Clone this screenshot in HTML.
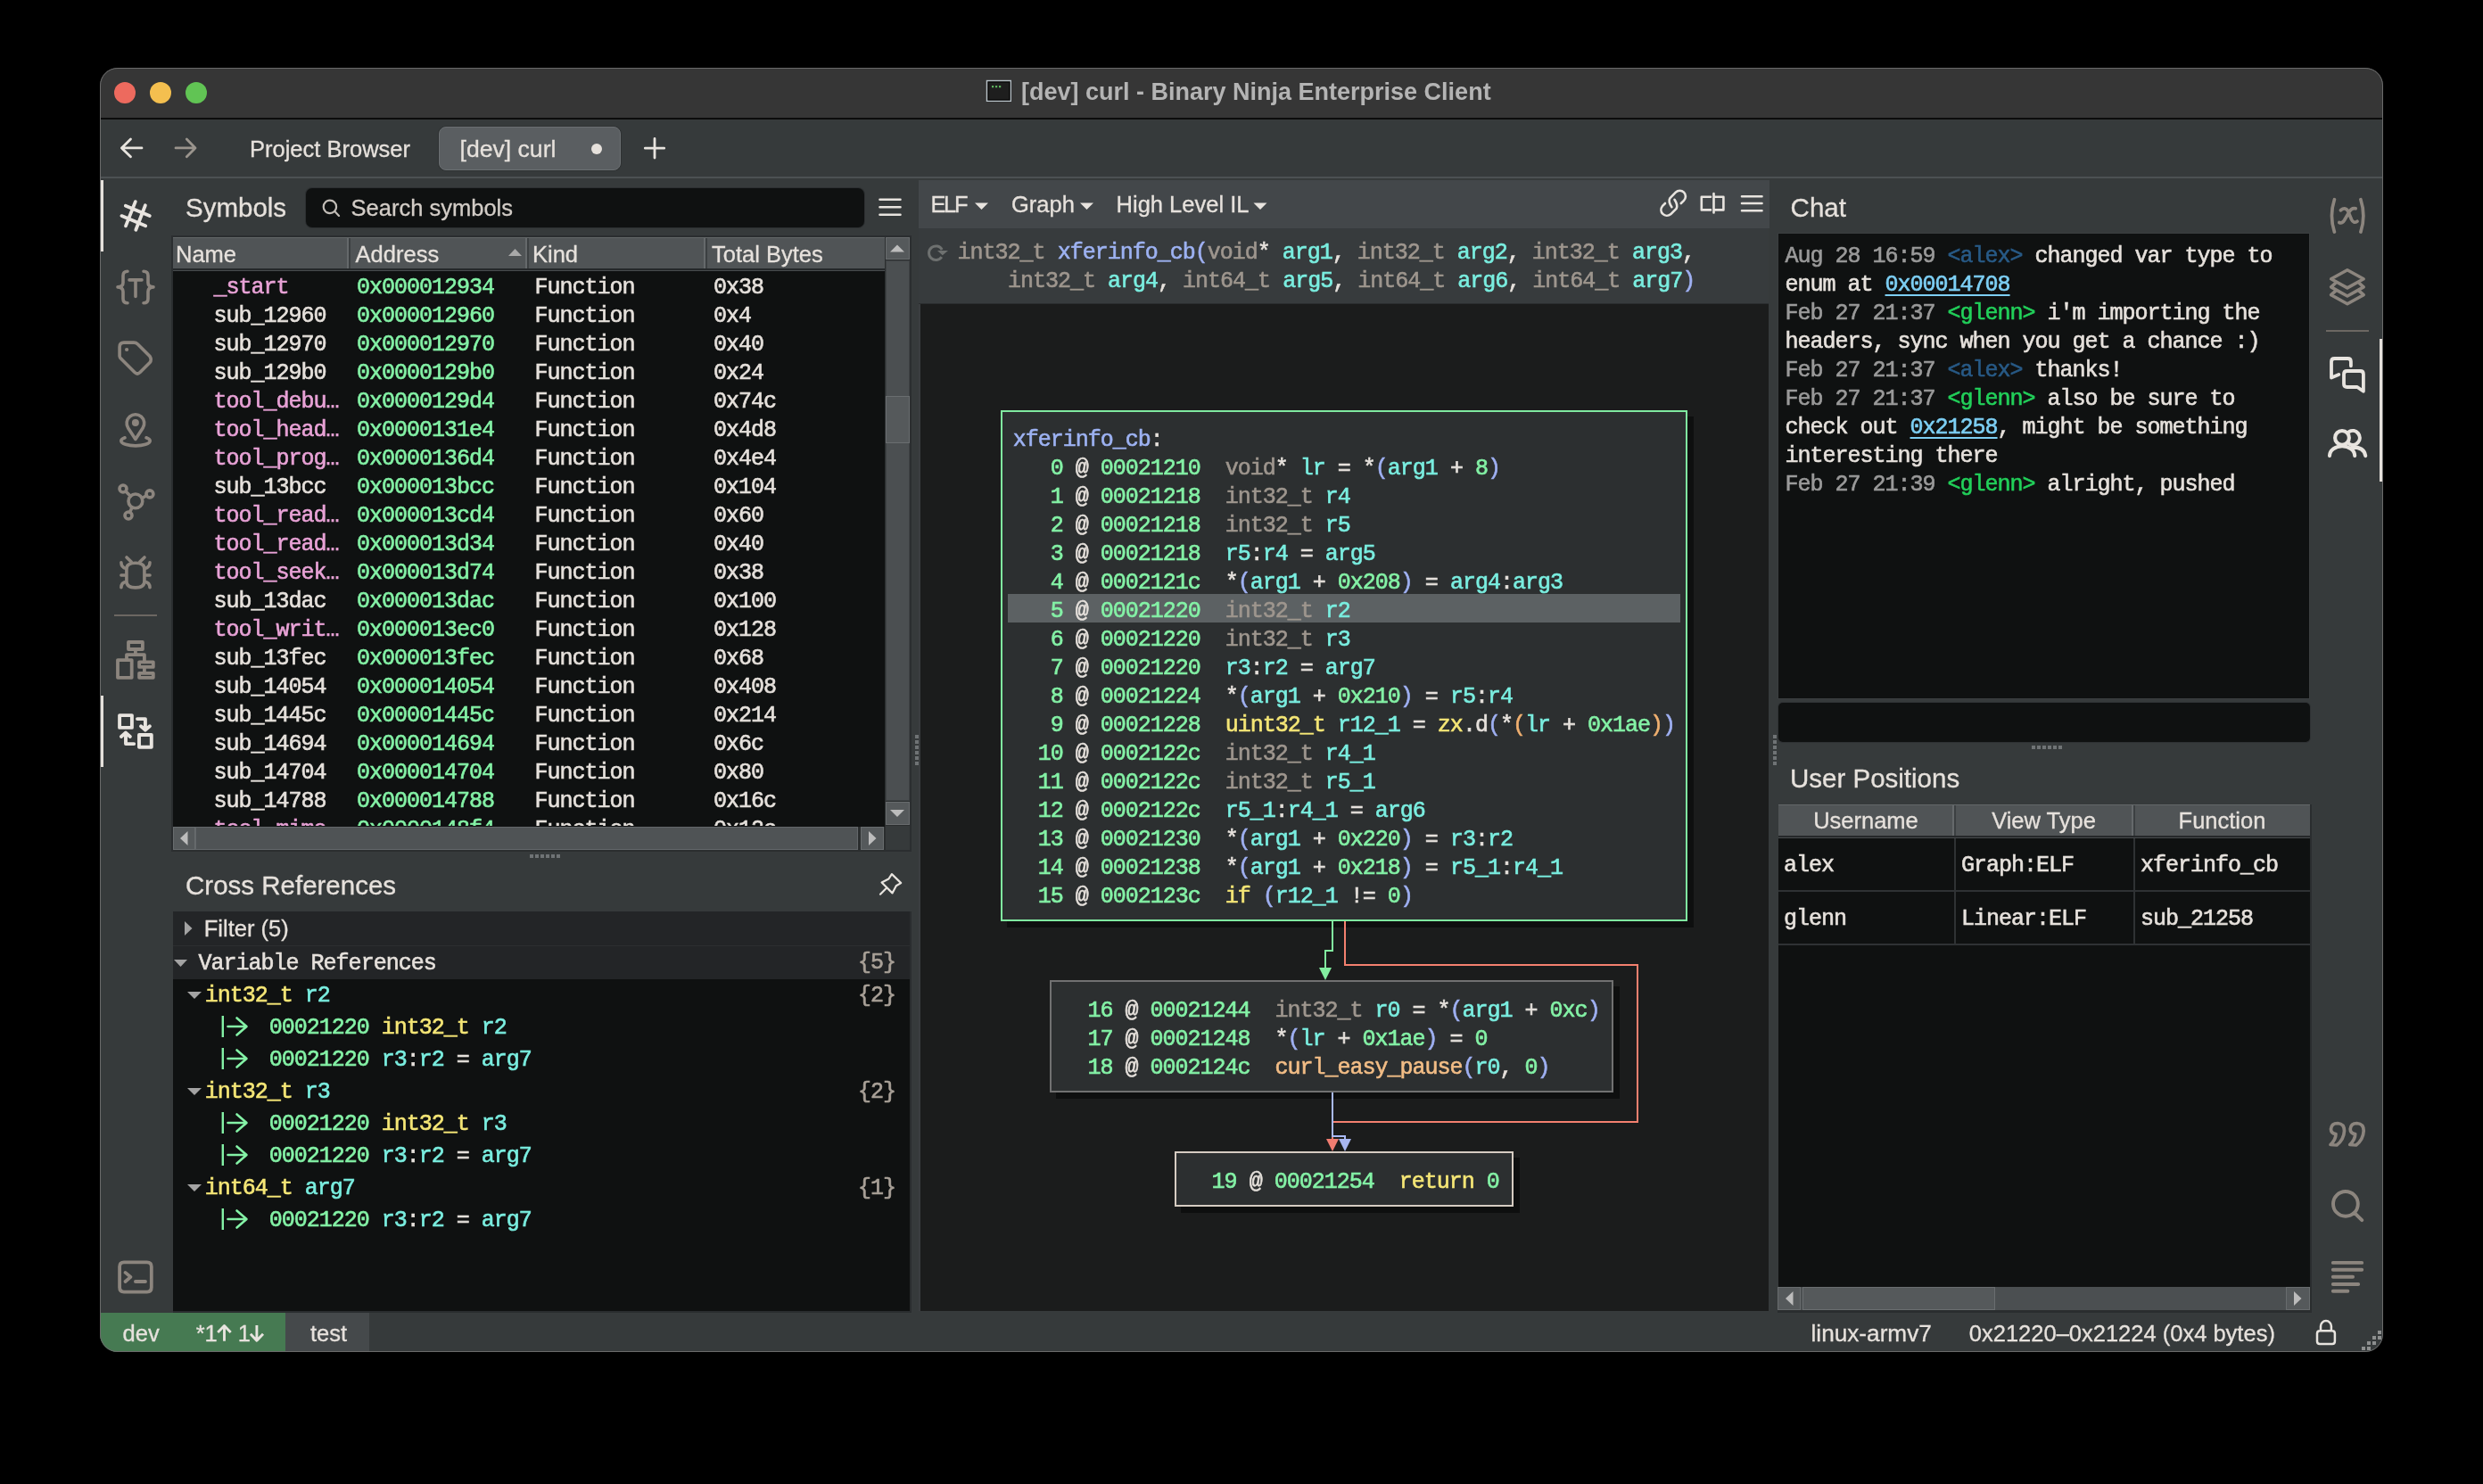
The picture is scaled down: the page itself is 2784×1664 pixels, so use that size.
<!DOCTYPE html>
<html><head><meta charset="utf-8">
<style>
*{margin:0;padding:0;box-sizing:border-box}
html,body{width:2784px;height:1664px;background:#000;overflow:hidden}
body{position:relative;font-family:"Liberation Sans",sans-serif;color:#e6e1dc}
.a{position:absolute}
.m{position:absolute;font-family:"Liberation Mono",monospace;font-size:25px;letter-spacing:-1px;line-height:32px;white-space:pre;-webkit-text-stroke-width:0.6px}
.s{position:absolute;font-family:"Liberation Sans",sans-serif;font-size:25.5px;line-height:40px;white-space:pre;-webkit-text-stroke-width:0.3px}
.t{position:absolute;font-family:"Liberation Sans",sans-serif;font-size:29.5px;line-height:40px;white-space:pre;-webkit-text-stroke-width:0.3px}
/* syntax colors */
.g{color:#84f2a6}  /* address / number green */
.c{color:#7aeee0}  /* variable cyan */
.ty{color:#9e968e} /* type gray */
.y{color:#f5e676}  /* keyword yellow */
.fn{color:#9db2f2} /* function name */
.pk{color:#e8a2d6} /* import pink */
.pp{color:#9fb0f2} /* paren purple */
.po{color:#f0b070} /* paren orange */
.or{color:#f2bd86} /* call orange */
.w{color:#e6e1dc}
#win{left:112px;top:76px;width:2560px;height:1440px;border-radius:20px;overflow:hidden;background:#363a3b}
</style></head>
<body>
<div id="win" class="a"><div id="pg" class="a" style="left:-112px;top:-76px;width:2784px;height:1664px">
  <!-- title bar -->
  <div class="a" style="left:112px;top:76px;width:2560px;height:56px;background:#363636"></div>
  <div class="a" style="left:112px;top:132px;width:2560px;height:2px;background:#0c0c0c"></div>
  <!-- toolbar -->
  <div class="a" style="left:112px;top:198px;width:2560px;height:2px;background:#4c5153"></div>
  <!-- status bar -->
  <div class="a" style="left:112px;top:1472px;width:208px;height:44px;background:#467a52"></div>
  <div class="a" style="left:320px;top:1472px;width:94px;height:44px;background:#45494b"></div>

  <!-- ===== STRUCTURE ===== -->
  <!-- left sidebar border -->
  <div class="a" style="left:192px;top:264px;width:830px;height:691px;background:#2b2e30"></div>
  <div class="a" style="left:112px;top:202px;width:4px;height:80px;background:#e6e1dc"></div>
  <div class="a" style="left:112px;top:780px;width:4px;height:80px;background:#e6e1dc"></div>
  <div class="a" style="left:128px;top:689px;width:48px;height:2px;background:#6c6762"></div>
  <!-- symbols search box -->
  <div class="a" style="left:343px;top:211px;width:626px;height:44px;background:#0f1111;border-radius:7px;box-shadow:0 0 0 1px #2d3032"></div>
  <!-- symbols table -->
  <div class="a" style="left:194px;top:266px;width:798px;height:661px;background:#0f1111"></div>
  <div class="a" style="left:194px;top:266px;width:798px;height:35px;background:#505456;border-top:1px solid #646869"></div>
  <div class="a" style="left:194px;top:301px;width:798px;height:2px;background:#25282a"></div>
  <div class="a" style="left:194px;top:303px;width:798px;height:1px;background:#474b4d"></div>
  <div class="a" style="left:389px;top:267px;width:2px;height:34px;background:#65696b"></div><div class="a" style="left:391px;top:267px;width:2px;height:34px;background:#3c4042"></div>
  <div class="a" style="left:589px;top:267px;width:2px;height:34px;background:#65696b"></div><div class="a" style="left:591px;top:267px;width:2px;height:34px;background:#3c4042"></div>
  <div class="a" style="left:789px;top:267px;width:2px;height:34px;background:#65696b"></div><div class="a" style="left:791px;top:267px;width:2px;height:34px;background:#3c4042"></div>
  <!-- vscroll -->
  <div class="a" style="left:992px;top:266px;width:28px;height:687px;background:#2b2e2f"></div>
  <div class="a" style="left:993px;top:266px;width:27px;height:25px;background:#55595b;border:1px solid #686c6e"></div>
  <div class="a" style="left:993px;top:292px;width:27px;height:606px;background:#4b4f51;border:1px solid #3e4244"></div>
  <div class="a" style="left:993px;top:444px;width:27px;height:53px;background:#55595b;border:1px solid #6a6e70"></div>
  <div class="a" style="left:993px;top:899px;width:27px;height:26px;background:#55595b;border:1px solid #686c6e"></div>
  <div class="a" style="left:993px;top:926px;width:27px;height:27px;background:#363a3b"></div>
  <!-- hscroll -->
  <div class="a" style="left:194px;top:927px;width:798px;height:28px;background:#2b2e2f"></div>
  <div class="a" style="left:194px;top:927px;width:25px;height:26px;background:#55595b;border:1px solid #686c6e"></div>
  <div class="a" style="left:219px;top:927px;width:743px;height:26px;background:#4f5355;border:1px solid #63676a"></div>
  <div class="a" style="left:965px;top:927px;width:26px;height:26px;background:#55595b;border:1px solid #686c6e"></div>
  <!-- xref panel -->
  <div class="a" style="left:194px;top:1022px;width:826px;height:38px;background:#232527"></div>
  <div class="a" style="left:194px;top:1060px;width:826px;height:1px;background:#2c2f31"></div>
  <div class="a" style="left:194px;top:1061px;width:826px;height:37px;background:#232527"></div>
  <div class="a" style="left:194px;top:1098px;width:826px;height:372px;background:#0f1111"></div>
  <div class="a" style="left:1020px;top:1022px;width:2px;height:450px;background:#2a2d2f"></div>
  <div class="a" style="left:194px;top:1470px;width:828px;height:2px;background:#2a2d2f"></div>
  <!-- center: graph header -->
  <div class="a" style="left:1030px;top:202px;width:954px;height:54px;background:#43474a"></div>
  <div class="a" style="left:1030px;top:256px;width:953px;height:85px;background:#373b3d"></div>
  <div class="a" style="left:1030px;top:340px;width:953px;height:1px;background:#2a2d2f"></div>
  <div class="a" style="left:1030px;top:341px;width:953px;height:1129px;background:#1b1c1c;border-left:2px solid #3b3e40"></div>
  <!-- right panel: chat -->
  <div class="a" style="left:1993px;top:261px;width:597px;height:523px;background:#0f1111;border:1px solid #3b3e40"></div>
  <div class="a" style="left:1994px;top:788px;width:596px;height:44px;background:#0f1111;border-radius:5px;box-shadow:0 0 0 1px #2f3234"></div>
  <!-- user positions table -->
  <div class="a" style="left:1994px;top:902px;width:596px;height:568px;background:#0f1111"></div>
  <div class="a" style="left:1994px;top:902px;width:596px;height:35px;background:#505456;border-top:1px solid #646869"></div>
  <div class="a" style="left:1994px;top:937px;width:596px;height:2px;background:#25282a"></div>
  <div class="a" style="left:1994px;top:939px;width:596px;height:1px;background:#474b4d"></div>
  <div class="a" style="left:2189px;top:903px;width:2px;height:34px;background:#65696b"></div><div class="a" style="left:2191px;top:903px;width:2px;height:34px;background:#3c4042"></div>
  <div class="a" style="left:2390px;top:903px;width:2px;height:34px;background:#65696b"></div><div class="a" style="left:2392px;top:903px;width:2px;height:34px;background:#3c4042"></div>
  <div class="a" style="left:1994px;top:998px;width:596px;height:2px;background:#2f3234"></div>
  <div class="a" style="left:1994px;top:1058px;width:596px;height:2px;background:#2f3234"></div>
  <div class="a" style="left:2191px;top:940px;width:2px;height:118px;background:#2f3234"></div>
  <div class="a" style="left:2392px;top:940px;width:2px;height:118px;background:#2f3234"></div>
  <div class="a" style="left:2590px;top:902px;width:2px;height:570px;background:#2a2d2f"></div>
  <!-- user pos hscroll -->
  <div class="a" style="left:1993px;top:1443px;width:598px;height:27px;background:#2b2e2f"></div>
  <div class="a" style="left:1993px;top:1443px;width:26px;height:26px;background:#55595b;border:1px solid #686c6e"></div>
  <div class="a" style="left:2019px;top:1443px;width:544px;height:26px;background:#4b4f51"></div>
  <div class="a" style="left:2021px;top:1443px;width:216px;height:26px;background:#55595b;border:1px solid #6a6e70"></div>
  <div class="a" style="left:2563px;top:1443px;width:27px;height:26px;background:#55595b;border:1px solid #686c6e"></div>
  <div class="a" style="left:1993px;top:1470px;width:599px;height:2px;background:#2a2d2f"></div>
  <!-- right sidebar -->
  <div class="a" style="left:2608px;top:370px;width:48px;height:2px;background:#6c6762"></div>
  <div class="a" style="left:2668px;top:380px;width:4px;height:160px;background:#e6e1dc"></div>
  <!-- tab -->
  <div class="a" style="left:491px;top:141px;width:206px;height:51px;border-radius:9px;background:#2f3233"></div>
  <div class="a" style="left:492px;top:142px;width:204px;height:49px;border-radius:8px;background:#5a5e61;border:1px solid #6b6f72"></div>
  <div class="a" style="left:663px;top:161px;width:12px;height:12px;border-radius:6px;background:#e6e1dc"></div>
  <!-- traffic lights -->
  <div class="a" style="left:128px;top:92px;width:24px;height:24px;border-radius:12px;background:#ed6a5e"></div>
  <div class="a" style="left:168px;top:92px;width:24px;height:24px;border-radius:12px;background:#f4bf4f"></div>
  <div class="a" style="left:208px;top:92px;width:24px;height:24px;border-radius:12px;background:#61c454"></div>
<!--NODES-->
  <div class="a" style="left:1122px;top:460px;width:770px;height:573px;background:#2c2f30;border:2px solid #80eaa0;box-shadow:7px 7px 0 #0e0f0f"></div>
  <div class="a" style="left:1177px;top:1099px;width:632px;height:126px;background:#2c2f30;border:2px solid #717171;box-shadow:7px 7px 0 #0e0f0f"></div>
  <div class="a" style="left:1317px;top:1291px;width:380px;height:62px;background:#2c2f30;border:2px solid #d6ccc2;box-shadow:7px 7px 0 #0e0f0f"></div>
<!--/NODES-->
<!--TEXT-->
<div class="a" style="left:0;top:0;width:2784px;height:1664px;will-change:transform"><div class="a" style="left:1145px;top:83px;font-size:27px;font-weight:700;line-height:40px;white-space:pre;color:#b4b4b4">[dev] curl - Binary Ninja Enterprise Client</div>
<div class="s" style="left:280px;top:147px;">Project Browser</div>
<div class="s" style="left:515.5px;top:147px;font-size:26.6px">[dev] curl</div>
<div class="t" style="left:208px;top:213px;">Symbols</div>
<div class="s" style="left:393.6px;top:213px;color:#d2ccc6">Search symbols</div>
<div class="s" style="left:197px;top:264.7px;">Name</div>
<div class="s" style="left:398.6px;top:264.7px;">Address</div>
<div class="s" style="left:597px;top:264.7px;">Kind</div>
<div class="s" style="left:798px;top:264.7px;">Total Bytes</div>
<div class="a" style="left:194px;top:304px;width:798px;height:622px;overflow:hidden"><div class="a" style="left:-194px;top:-304px;width:1000px;height:1000px"><div class="m pk" style="left:239.5px;top:307px">_start</div><div class="m g" style="left:400px;top:307px">0x000012934</div><div class="m" style="left:599.6px;top:307px">Function</div><div class="m" style="left:800px;top:307px">0x38</div><div class="m w" style="left:239.5px;top:339px">sub_12960</div><div class="m g" style="left:400px;top:339px">0x000012960</div><div class="m" style="left:599.6px;top:339px">Function</div><div class="m" style="left:800px;top:339px">0x4</div><div class="m w" style="left:239.5px;top:371px">sub_12970</div><div class="m g" style="left:400px;top:371px">0x000012970</div><div class="m" style="left:599.6px;top:371px">Function</div><div class="m" style="left:800px;top:371px">0x40</div><div class="m w" style="left:239.5px;top:403px">sub_129b0</div><div class="m g" style="left:400px;top:403px">0x0000129b0</div><div class="m" style="left:599.6px;top:403px">Function</div><div class="m" style="left:800px;top:403px">0x24</div><div class="m pk" style="left:239.5px;top:435px">tool_debu…</div><div class="m g" style="left:400px;top:435px">0x0000129d4</div><div class="m" style="left:599.6px;top:435px">Function</div><div class="m" style="left:800px;top:435px">0x74c</div><div class="m pk" style="left:239.5px;top:467px">tool_head…</div><div class="m g" style="left:400px;top:467px">0x0000131e4</div><div class="m" style="left:599.6px;top:467px">Function</div><div class="m" style="left:800px;top:467px">0x4d8</div><div class="m pk" style="left:239.5px;top:499px">tool_prog…</div><div class="m g" style="left:400px;top:499px">0x0000136d4</div><div class="m" style="left:599.6px;top:499px">Function</div><div class="m" style="left:800px;top:499px">0x4e4</div><div class="m w" style="left:239.5px;top:531px">sub_13bcc</div><div class="m g" style="left:400px;top:531px">0x000013bcc</div><div class="m" style="left:599.6px;top:531px">Function</div><div class="m" style="left:800px;top:531px">0x104</div><div class="m pk" style="left:239.5px;top:563px">tool_read…</div><div class="m g" style="left:400px;top:563px">0x000013cd4</div><div class="m" style="left:599.6px;top:563px">Function</div><div class="m" style="left:800px;top:563px">0x60</div><div class="m pk" style="left:239.5px;top:595px">tool_read…</div><div class="m g" style="left:400px;top:595px">0x000013d34</div><div class="m" style="left:599.6px;top:595px">Function</div><div class="m" style="left:800px;top:595px">0x40</div><div class="m pk" style="left:239.5px;top:627px">tool_seek…</div><div class="m g" style="left:400px;top:627px">0x000013d74</div><div class="m" style="left:599.6px;top:627px">Function</div><div class="m" style="left:800px;top:627px">0x38</div><div class="m w" style="left:239.5px;top:659px">sub_13dac</div><div class="m g" style="left:400px;top:659px">0x000013dac</div><div class="m" style="left:599.6px;top:659px">Function</div><div class="m" style="left:800px;top:659px">0x100</div><div class="m pk" style="left:239.5px;top:691px">tool_writ…</div><div class="m g" style="left:400px;top:691px">0x000013ec0</div><div class="m" style="left:599.6px;top:691px">Function</div><div class="m" style="left:800px;top:691px">0x128</div><div class="m w" style="left:239.5px;top:723px">sub_13fec</div><div class="m g" style="left:400px;top:723px">0x000013fec</div><div class="m" style="left:599.6px;top:723px">Function</div><div class="m" style="left:800px;top:723px">0x68</div><div class="m w" style="left:239.5px;top:755px">sub_14054</div><div class="m g" style="left:400px;top:755px">0x000014054</div><div class="m" style="left:599.6px;top:755px">Function</div><div class="m" style="left:800px;top:755px">0x408</div><div class="m w" style="left:239.5px;top:787px">sub_1445c</div><div class="m g" style="left:400px;top:787px">0x00001445c</div><div class="m" style="left:599.6px;top:787px">Function</div><div class="m" style="left:800px;top:787px">0x214</div><div class="m w" style="left:239.5px;top:819px">sub_14694</div><div class="m g" style="left:400px;top:819px">0x000014694</div><div class="m" style="left:599.6px;top:819px">Function</div><div class="m" style="left:800px;top:819px">0x6c</div><div class="m w" style="left:239.5px;top:851px">sub_14704</div><div class="m g" style="left:400px;top:851px">0x000014704</div><div class="m" style="left:599.6px;top:851px">Function</div><div class="m" style="left:800px;top:851px">0x80</div><div class="m w" style="left:239.5px;top:883px">sub_14788</div><div class="m g" style="left:400px;top:883px">0x000014788</div><div class="m" style="left:599.6px;top:883px">Function</div><div class="m" style="left:800px;top:883px">0x16c</div><div class="m pk" style="left:239.5px;top:915px">tool_mime…</div><div class="m g" style="left:400px;top:915px">0x0000148f4</div><div class="m" style="left:599.6px;top:915px">Function</div><div class="m" style="left:800px;top:915px">0x12c</div></div></div>
<div class="t" style="left:208px;top:973px;">Cross References</div>
<div class="s" style="left:228.8px;top:1021px;">Filter (5)</div>
<div class="m" style="left:222.6px;top:1064.8px;">Variable References</div>
<div class="m" style="left:962px;top:1064.3px;color:#a9a198">{5}</div>
<div class="m" style="left:229.7px;top:1101.2px;"><span class="y">int32_t</span> <span class="c">r2</span></div>
<div class="m" style="left:962px;top:1101.2px;color:#a9a198">{2}</div>
<div class="m" style="left:301.7px;top:1137.2px;"><span class="g">00021220</span> <span class="y">int32_t</span> <span class="c">r2</span></div>
<div class="m" style="left:301.7px;top:1173.2px;"><span class="g">00021220</span> <span class="c">r3</span>:<span class="c">r2</span> = <span class="c">arg7</span></div>
<div class="m" style="left:229.7px;top:1209.2px;"><span class="y">int32_t</span> <span class="c">r3</span></div>
<div class="m" style="left:962px;top:1209.2px;color:#a9a198">{2}</div>
<div class="m" style="left:301.7px;top:1245.2px;"><span class="g">00021220</span> <span class="y">int32_t</span> <span class="c">r3</span></div>
<div class="m" style="left:301.7px;top:1281.2px;"><span class="g">00021220</span> <span class="c">r3</span>:<span class="c">r2</span> = <span class="c">arg7</span></div>
<div class="m" style="left:229.7px;top:1317.2px;"><span class="y">int64_t</span> <span class="c">arg7</span></div>
<div class="m" style="left:962px;top:1317.2px;color:#a9a198">{1}</div>
<div class="m" style="left:301.7px;top:1353.2px;"><span class="g">00021220</span> <span class="c">r3</span>:<span class="c">r2</span> = <span class="c">arg7</span></div>
<div class="s" style="left:1043.5px;top:209.2px;letter-spacing:-2.4px">ELF</div>
<div class="s" style="left:1134px;top:209.2px;">Graph</div>
<div class="s" style="left:1251.6px;top:209.2px;">High Level IL</div>
<div class="m" style="left:1073.6px;top:268px;"><span class="ty">int32_t</span> <span class="fn">xferinfo_cb</span><span class="pp">(</span><span class="ty">void</span>* <span class="c">arg1</span>, <span class="ty">int32_t</span> <span class="c">arg2</span>, <span class="ty">int32_t</span> <span class="c">arg3</span>,</div>
<div class="m" style="left:1130px;top:300px;"><span class="ty">int32_t</span> <span class="c">arg4</span>, <span class="ty">int64_t</span> <span class="c">arg5</span>, <span class="ty">int64_t</span> <span class="c">arg6</span>, <span class="ty">int64_t</span> <span class="c">arg7</span><span class="pp">)</span></div>
<div class="a" style="left:1130px;top:666px;width:754px;height:32px;background:#5c6163"></div>
<div class="m" style="left:1135.7px;top:477.7px;"><span class="fn">xferinfo_cb</span>:</div>
<div class="m" style="left:1135.7px;top:509.7px;">  <span class="g"> 0</span> @ <span class="g">00021210</span>  <span class="ty">void</span>* <span class="c">lr</span> = *<span class="pp">(</span><span class="c">arg1</span> + <span class="g">8</span><span class="pp">)</span></div>
<div class="m" style="left:1135.7px;top:541.7px;">  <span class="g"> 1</span> @ <span class="g">00021218</span>  <span class="ty">int32_t</span> <span class="c">r4</span></div>
<div class="m" style="left:1135.7px;top:573.7px;">  <span class="g"> 2</span> @ <span class="g">00021218</span>  <span class="ty">int32_t</span> <span class="c">r5</span></div>
<div class="m" style="left:1135.7px;top:605.7px;">  <span class="g"> 3</span> @ <span class="g">00021218</span>  <span class="c">r5</span>:<span class="c">r4</span> = <span class="c">arg5</span></div>
<div class="m" style="left:1135.7px;top:637.7px;">  <span class="g"> 4</span> @ <span class="g">0002121c</span>  *<span class="pp">(</span><span class="c">arg1</span> + <span class="g">0x208</span><span class="pp">)</span> = <span class="c">arg4</span>:<span class="c">arg3</span></div>
<div class="m" style="left:1135.7px;top:669.7px;">  <span class="g"> 5</span> @ <span class="g">00021220</span>  <span class="ty">int32_t</span> <span class="c">r2</span></div>
<div class="m" style="left:1135.7px;top:701.7px;">  <span class="g"> 6</span> @ <span class="g">00021220</span>  <span class="ty">int32_t</span> <span class="c">r3</span></div>
<div class="m" style="left:1135.7px;top:733.7px;">  <span class="g"> 7</span> @ <span class="g">00021220</span>  <span class="c">r3</span>:<span class="c">r2</span> = <span class="c">arg7</span></div>
<div class="m" style="left:1135.7px;top:765.7px;">  <span class="g"> 8</span> @ <span class="g">00021224</span>  *<span class="pp">(</span><span class="c">arg1</span> + <span class="g">0x210</span><span class="pp">)</span> = <span class="c">r5</span>:<span class="c">r4</span></div>
<div class="m" style="left:1135.7px;top:797.7px;">  <span class="g"> 9</span> @ <span class="g">00021228</span>  <span class="y">uint32_t</span> <span class="c">r12_1</span> = <span class="y">zx</span>.d<span class="pp">(</span>*<span class="po">(</span><span class="c">lr</span> + <span class="g">0x1ae</span><span class="po">)</span><span class="pp">)</span></div>
<div class="m" style="left:1135.7px;top:829.7px;">  <span class="g">10</span> @ <span class="g">0002122c</span>  <span class="ty">int32_t</span> <span class="c">r4_1</span></div>
<div class="m" style="left:1135.7px;top:861.7px;">  <span class="g">11</span> @ <span class="g">0002122c</span>  <span class="ty">int32_t</span> <span class="c">r5_1</span></div>
<div class="m" style="left:1135.7px;top:893.7px;">  <span class="g">12</span> @ <span class="g">0002122c</span>  <span class="c">r5_1</span>:<span class="c">r4_1</span> = <span class="c">arg6</span></div>
<div class="m" style="left:1135.7px;top:925.7px;">  <span class="g">13</span> @ <span class="g">00021230</span>  *<span class="pp">(</span><span class="c">arg1</span> + <span class="g">0x220</span><span class="pp">)</span> = <span class="c">r3</span>:<span class="c">r2</span></div>
<div class="m" style="left:1135.7px;top:957.7px;">  <span class="g">14</span> @ <span class="g">00021238</span>  *<span class="pp">(</span><span class="c">arg1</span> + <span class="g">0x218</span><span class="pp">)</span> = <span class="c">r5_1</span>:<span class="c">r4_1</span></div>
<div class="m" style="left:1135.7px;top:989.7px;">  <span class="g">15</span> @ <span class="g">0002123c</span>  <span class="y">if</span> <span class="pp">(</span><span class="c">r12_1</span> != <span class="g">0</span><span class="pp">)</span></div>
<div class="m" style="left:1191.4px;top:1118px;">  <span class="g">16</span> @ <span class="g">00021244</span>  <span class="ty">int32_t</span> <span class="c">r0</span> = *<span class="pp">(</span><span class="c">arg1</span> + <span class="g">0xc</span><span class="pp">)</span></div>
<div class="m" style="left:1191.4px;top:1150px;">  <span class="g">17</span> @ <span class="g">00021248</span>  *<span class="pp">(</span><span class="c">lr</span> + <span class="g">0x1ae</span><span class="pp">)</span> = <span class="g">0</span></div>
<div class="m" style="left:1191.4px;top:1182px;">  <span class="g">18</span> @ <span class="g">0002124c</span>  <span class="or">curl_easy_pause</span><span class="pp">(</span><span class="c">r0</span>, <span class="g">0</span><span class="pp">)</span></div>
<div class="m" style="left:1330.6px;top:1309.5px;">  <span class="g">19</span> @ <span class="g">00021254</span>  <span class="y">return</span> <span class="g">0</span></div>
<div class="t" style="left:2007.6px;top:213px;">Chat</div>
<div class="m" style="left:2001.5px;top:272.4px;"><span style="color:#9a9a9a">Aug 28 16:59</span> <span style="color:#285a86">&lt;alex&gt;</span> changed var type to</div>
<div class="m" style="left:2001.5px;top:304.4px;">enum at <span style="color:#7dcff4;text-decoration:underline;text-underline-offset:4px">0x00014708</span></div>
<div class="m" style="left:2001.5px;top:336.4px;"><span style="color:#9a9a9a">Feb 27 21:37</span> <span style="color:#22d05a">&lt;glenn&gt;</span> i'm importing the</div>
<div class="m" style="left:2001.5px;top:368.4px;">headers, sync when you get a chance :)</div>
<div class="m" style="left:2001.5px;top:400.4px;"><span style="color:#9a9a9a">Feb 27 21:37</span> <span style="color:#285a86">&lt;alex&gt;</span> thanks!</div>
<div class="m" style="left:2001.5px;top:432.4px;"><span style="color:#9a9a9a">Feb 27 21:37</span> <span style="color:#22d05a">&lt;glenn&gt;</span> also be sure to</div>
<div class="m" style="left:2001.5px;top:464.4px;">check out <span style="color:#7dcff4;text-decoration:underline;text-underline-offset:4px">0x21258</span>, might be something</div>
<div class="m" style="left:2001.5px;top:496.4px;">interesting there</div>
<div class="m" style="left:2001.5px;top:528.4px;"><span style="color:#9a9a9a">Feb 27 21:39</span> <span style="color:#22d05a">&lt;glenn&gt;</span> alright, pushed</div>
<div class="t" style="left:2007px;top:852.7px;">User Positions</div>
<div class="s" style="left:1994px;top:899.7px;width:196px;text-align:center">Username</div>
<div class="s" style="left:2192px;top:899.7px;width:199px;text-align:center">View Type</div>
<div class="s" style="left:2393px;top:899.7px;width:197px;text-align:center">Function</div>
<div class="m" style="left:2000px;top:955px;">alex</div>
<div class="m" style="left:2199px;top:955px;">Graph:ELF</div>
<div class="m" style="left:2400px;top:955px;">xferinfo_cb</div>
<div class="m" style="left:2000px;top:1015px;">glenn</div>
<div class="m" style="left:2199px;top:1015px;">Linear:ELF</div>
<div class="m" style="left:2400px;top:1015px;">sub_21258</div>
<div class="s" style="left:137.6px;top:1474.5px;">dev</div>
<div class="s" style="left:219.7px;top:1474.5px;">*1</div>
<div class="s" style="left:266.8px;top:1474.5px;">1</div>
<div class="s" style="left:348px;top:1474.5px;">test</div>
<div class="s" style="left:2030.5px;top:1474.5px;font-size:26.2px">linux-armv7</div>
<div class="s" style="left:2207.8px;top:1474.5px;">0x21220–0x21224 (0x4 bytes)</div></div>
<!--/TEXT-->
<!--SVG-->
<svg class="a" style="left:0;top:0" width="2784" height="1664" viewBox="0 0 2784 1664"><path d="M151.8,226.1 L141,253.4 M162.9,230.3 L152.3,257.8 M140.8,230.8 L167.8,242.1 M136.4,242.1 L163.2,253.2" fill="none" stroke="#e8e4df" stroke-width="3.8" stroke-linecap="round" stroke-linejoin="round"/><path d="M143,304.2 Q138,304.2 138,309 V317 Q138,321.4 132,321.9 Q138,322.4 138,327 V335 Q138,339.8 143,339.8" fill="none" stroke="#8c857e" stroke-width="3.6" stroke-linecap="round" stroke-linejoin="round"/><path d="M161,304.2 Q166,304.2 166,309 V317 Q166,321.4 172,321.9 Q166,322.4 166,327 V335 Q166,339.8 161,339.8" fill="none" stroke="#8c857e" stroke-width="3.6" stroke-linecap="round" stroke-linejoin="round"/><path d="M145,313.9 H159 M152,313.9 V332.4" fill="none" stroke="#8c857e" stroke-width="3.6" stroke-linecap="round" stroke-linejoin="round"/><path d="M134.1,399.5 V389 Q134.1,384.1 139,384.1 H150 Q152.6,384.1 154.5,386 L168,399.5 Q170.5,403.6 168,406.5 L157,417.5 Q154,420.5 151,417.5 L136.5,403 Q134.1,401 134.1,399.5 Z" fill="none" stroke="#8c857e" stroke-width="3.6" stroke-linecap="round" stroke-linejoin="round"/><path d="M140,392 a2.1,2.1 0 1,0 4.2,0 a2.1,2.1 0 1,0 -4.2,0" fill="#8c857e" stroke="none"/><path d="M151.9,492.4 L143.7,479.9 A9.8,9.8 0 1 1 160.1,479.9 Z" fill="none" stroke="#8c857e" stroke-width="3.6" stroke-linecap="round" stroke-linejoin="round"/><path d="M147.9,474 a4,4 0 1,0 8,0 a4,4 0 1,0 -8,0" fill="#8c857e" stroke="none"/><path d="M140,490.8 A16.2,5.4 0 1 0 164,490.8" fill="none" stroke="#8c857e" stroke-width="3.6" stroke-linecap="round" stroke-linejoin="round"/><path d="M144,561.9 a7.9,7.9 0 1,0 15.8,0 a7.9,7.9 0 1,0 -15.8,0" fill="none" stroke="#8c857e" stroke-width="3.6" stroke-linecap="round" stroke-linejoin="round"/><path d="M134,548 a4,4 0 1,0 8,0 a4,4 0 1,0 -8,0 M163.9,553.9 a4,4 0 1,0 8,0 a4,4 0 1,0 -8,0 M140,578 a4,4 0 1,0 8,0 a4,4 0 1,0 -8,0" fill="none" stroke="#8c857e" stroke-width="3.6" stroke-linecap="round" stroke-linejoin="round"/><path d="M141,551 L146.5,556.5 M164.5,555.5 L159.5,558.5 M145.5,574.5 L148,569" fill="none" stroke="#8c857e" stroke-width="3.6" stroke-linecap="round" stroke-linejoin="round"/><path d="M141.9,638 Q141.9,631.3 151.9,631.3 Q161.9,631.3 161.9,638 V652 Q161.9,658.9 151.9,658.9 Q141.9,658.9 141.9,652 Z" fill="none" stroke="#8c857e" stroke-width="3.6" stroke-linecap="round" stroke-linejoin="round"/><path d="M142,624.9 L147.2,630.1 M162,624.9 L156.8,630.1" fill="none" stroke="#8c857e" stroke-width="3.6" stroke-linecap="round" stroke-linejoin="round"/><path d="M135.9,630.8 Q136,636.5 141.5,637.5 M168,630.8 Q167.9,636.5 162.3,637.5" fill="none" stroke="#8c857e" stroke-width="3.6" stroke-linecap="round" stroke-linejoin="round"/><path d="M135.9,645 H141.2 M162.7,645 H168" fill="none" stroke="#8c857e" stroke-width="3.6" stroke-linecap="round" stroke-linejoin="round"/><path d="M135.9,658.8 Q136,653 141.5,652.2 M168,658.8 Q167.9,653 162.3,652.2" fill="none" stroke="#8c857e" stroke-width="3.6" stroke-linecap="round" stroke-linejoin="round"/><path d="M144,720 H159.9 V728 H144 Z M151.9,728 V734.2 M142,734.2 H161.9 M142,734.2 V740.1 M161.9,734.2 V742.3" fill="none" stroke="#8c857e" stroke-width="3.8" stroke-linecap="round" stroke-linejoin="round"/><path d="M132,740.1 H147.7 V759.8 H132 Z M156.1,742.3 H171.8 V747.9 H156.1 Z M161.9,747.9 V754.8 M156.1,754.8 H171.8 V759.8 H156.1 Z" fill="none" stroke="#8c857e" stroke-width="3.8" stroke-linecap="round" stroke-linejoin="round"/><path d="M134.1,802.1 H147.9 V815.9 H134.1 Z M156,824 H169.8 V837.8 H156 Z" fill="none" stroke="#e8e4df" stroke-width="3.9" stroke-linecap="round" stroke-linejoin="round"/><path d="M154,806.1 H162.9 V818.6 M158,814.2 L162.9,818.6 L167.9,814.2" fill="none" stroke="#e8e4df" stroke-width="3.9" stroke-linecap="round" stroke-linejoin="round"/><path d="M150.2,834.1 H141 V821.6 M135.9,826 L141,821.6 L145.9,826" fill="none" stroke="#e8e4df" stroke-width="3.9" stroke-linecap="round" stroke-linejoin="round"/><path d="M139,1415.3 H164.8 Q169.8,1415.3 169.8,1420.3 V1443.6 Q169.8,1448.6 164.8,1448.6 H139 Q134.1,1448.6 134.1,1443.6 V1420.3 Q134.1,1415.3 139,1415.3 Z" fill="none" stroke="#8c857e" stroke-width="3.8" stroke-linecap="round" stroke-linejoin="round"/><path d="M140.5,1426.9 L146.5,1431.9 L140.5,1437 M151.9,1437 H163" fill="none" stroke="#8c857e" stroke-width="3.8" stroke-linecap="round" stroke-linejoin="round"/><path d="M136.4,165.9 H159 M146.5,156 L136.4,165.9 L146.5,175.8" fill="none" stroke="#e8e4df" stroke-width="2.8" stroke-linecap="round" stroke-linejoin="round"/><path d="M197,165.9 H219 M209.3,156 L219,165.9 L209.3,175.8" fill="none" stroke="#9a948d" stroke-width="2.8" stroke-linecap="round" stroke-linejoin="round"/><path d="M734,155.5 V177 M723.3,166.2 H744.7" fill="none" stroke="#e8e4df" stroke-width="2.8" stroke-linecap="round" stroke-linejoin="round"/><rect x="1106.8" y="90.8" width="26.2" height="22.2" fill="#1e1e1e" stroke="#b8c2c8" stroke-width="2"/><rect x="1108" y="92" width="24" height="20" fill="none" stroke="#0a0a0a" stroke-width="1.5"/><path d="M1112,96 h2.2 v2.2 h-2.2 Z M1116,96 h2.2 v2.2 h-2.2 Z M1120,96 h2.2 v2.2 h-2.2 Z" fill="#5db35d" stroke="none"/><path d="M362.7,231.9 a7.2,7.2 0 1,0 14.4,0 a7.2,7.2 0 1,0 -14.4,0 M375.8,237.6 L380,241.9" fill="none" stroke="#c2bdb7" stroke-width="2.2" stroke-linecap="round" stroke-linejoin="round"/><path d="M986.5,223.8 H1009.5 M986.5,232.3 H1009.5 M986.5,240.7 H1009.5" fill="none" stroke="#e8e4df" stroke-width="2.6" stroke-linecap="round" stroke-linejoin="round"/><path d="M570,287 L585,287 L577.5,279 Z" fill="#a9a9a9" stroke="none"/><path d="M998,282.5 L1014,282.5 L1006,274.5 Z" fill="#bcbcbc" stroke="none"/><path d="M998,908 L1014,908 L1006,916 Z" fill="#bcbcbc" stroke="none"/><path d="M210.5,932 L210.5,948 L202,940 Z" fill="#bcbcbc" stroke="none"/><path d="M974,932 L974,948 L982.5,940 Z" fill="#bcbcbc" stroke="none"/><path d="M594,958 h4 v4 h-4 Z M1026,824 h4 v4 h-4 Z M1988,824 h4 v4 h-4 Z M2278,836 h4 v4 h-4 Z M600,958 h4 v4 h-4 Z M1026,830 h4 v4 h-4 Z M1988,830 h4 v4 h-4 Z M2284,836 h4 v4 h-4 Z M606,958 h4 v4 h-4 Z M1026,836 h4 v4 h-4 Z M1988,836 h4 v4 h-4 Z M2290,836 h4 v4 h-4 Z M612,958 h4 v4 h-4 Z M1026,842 h4 v4 h-4 Z M1988,842 h4 v4 h-4 Z M2296,836 h4 v4 h-4 Z M618,958 h4 v4 h-4 Z M1026,848 h4 v4 h-4 Z M1988,848 h4 v4 h-4 Z M2302,836 h4 v4 h-4 Z M624,958 h4 v4 h-4 Z M1026,854 h4 v4 h-4 Z M1988,854 h4 v4 h-4 Z M2308,836 h4 v4 h-4 Z" fill="#6f7375" stroke="none"/><path d="M999.9,980.1 L1010.2,990.1 L1004.8,993.3 L1000.5,1001.4 L988.6,989.5 L996.4,985.5 Z M993.2,996.5 L987,1002.7" fill="none" stroke="#e8e4df" stroke-width="2.2" stroke-linecap="round" stroke-linejoin="round"/><path d="M207,1033 L207,1049 L215.5,1041 Z" fill="#a3a3a3" stroke="none"/><path d="M195,1076 L210,1076 L202.5,1084 Z" fill="#a3a3a3" stroke="none"/><path d="M210,1112 L226,1112 L218,1120 Z" fill="#a3a3a3" stroke="none"/><path d="M210,1220 L226,1220 L218,1228 Z" fill="#a3a3a3" stroke="none"/><path d="M210,1328 L226,1328 L218,1336 Z" fill="#a3a3a3" stroke="none"/><path d="M249.8,1139 V1163" fill="none" stroke="#84f2a6" stroke-width="2.4" stroke-linecap="butt" stroke-linejoin="round"/><path d="M255.5,1151 H276 M265.5,1141.5 L276.5,1151 L265.5,1160.5" fill="none" stroke="#84f2a6" stroke-width="2.6" stroke-linecap="round" stroke-linejoin="round"/><path d="M249.8,1175 V1199" fill="none" stroke="#84f2a6" stroke-width="2.4" stroke-linecap="butt" stroke-linejoin="round"/><path d="M255.5,1187 H276 M265.5,1177.5 L276.5,1187 L265.5,1196.5" fill="none" stroke="#84f2a6" stroke-width="2.6" stroke-linecap="round" stroke-linejoin="round"/><path d="M249.8,1247 V1271" fill="none" stroke="#84f2a6" stroke-width="2.4" stroke-linecap="butt" stroke-linejoin="round"/><path d="M255.5,1259 H276 M265.5,1249.5 L276.5,1259 L265.5,1268.5" fill="none" stroke="#84f2a6" stroke-width="2.6" stroke-linecap="round" stroke-linejoin="round"/><path d="M249.8,1283 V1307" fill="none" stroke="#84f2a6" stroke-width="2.4" stroke-linecap="butt" stroke-linejoin="round"/><path d="M255.5,1295 H276 M265.5,1285.5 L276.5,1295 L265.5,1304.5" fill="none" stroke="#84f2a6" stroke-width="2.6" stroke-linecap="round" stroke-linejoin="round"/><path d="M249.8,1355 V1379" fill="none" stroke="#84f2a6" stroke-width="2.4" stroke-linecap="butt" stroke-linejoin="round"/><path d="M255.5,1367 H276 M265.5,1357.5 L276.5,1367 L265.5,1376.5" fill="none" stroke="#84f2a6" stroke-width="2.6" stroke-linecap="round" stroke-linejoin="round"/><path d="M1093,227.5 L1108,227.5 L1100.5,235 Z M1211,227.5 L1226,227.5 L1218.5,235 Z M1405.5,227.5 L1420.5,227.5 L1413,235 Z" fill="#e8e4df" stroke="none"/><path d="M1884.8,228 L1888,224.9 A6.5,6.5 0 0 0 1878.8,215.7 L1872.3,222.3 Q1870.2,225.9 1874.4,232.2 M1867,228 L1863.9,231.2 A6.5,6.5 0 0 0 1873.1,240.3 L1879.6,233.8 Q1881.7,230.1 1877.5,223.8" fill="none" stroke="#e8e4df" stroke-width="2.6" stroke-linecap="round" stroke-linejoin="round"/><path d="M1918,220.7 H1907.8 V235.4 H1918 M1921.5,220.7 H1932.4 V235.4 H1921.5 M1921.5,217 V238.5" fill="none" stroke="#e8e4df" stroke-width="2.6" stroke-linecap="round" stroke-linejoin="round"/><path d="M1953,220.2 H1975.5 M1953,228 H1975.5 M1953,236.2 H1975.5" fill="none" stroke="#e8e4df" stroke-width="2.6" stroke-linecap="round" stroke-linejoin="round"/><path d="M1056.2,280 A7.8,7.8 0 1 0 1055.8,288.1" fill="none" stroke="#6e7170" stroke-width="3" stroke-linecap="butt" stroke-linejoin="round"/><path d="M1051,281 L1063,281 L1056.8,286.2 Z" fill="#6e7170" stroke="none"/><path d="M1494,1033 V1066 H1486 V1086" fill="none" stroke="#82eea0" stroke-width="2" stroke-linecap="butt" stroke-linejoin="miter"/><path d="M1479,1085 L1493,1085 L1486,1099 Z" fill="#82eea0" stroke="none"/><path d="M1508,1033 V1082 H1836 V1258 H1494 V1277" fill="none" stroke="#f4806f" stroke-width="2" stroke-linecap="butt" stroke-linejoin="miter"/><path d="M1487,1277 L1501,1277 L1494,1291 Z" fill="#f07c70" stroke="none"/><path d="M1494,1225 V1274 H1508 V1277" fill="none" stroke="#aabaf8" stroke-width="2" stroke-linecap="butt" stroke-linejoin="miter"/><path d="M1501,1277 L1515,1277 L1508,1291 Z" fill="#a8b6f0" stroke="none"/><path d="M2617.4,223.7 Q2611.5,241.9 2617.4,260.1 M2646.9,223.7 Q2652.8,241.9 2646.9,260.1" fill="none" stroke="#8c857e" stroke-width="3.7" stroke-linecap="round" stroke-linejoin="round"/><path d="M2624.4,235.7 Q2629.5,231.5 2632.5,236.5 L2636.5,246 Q2638.8,251 2643,248.3 M2641.2,233.8 Q2636.5,232.5 2633.5,238.5 L2628.5,247 Q2626,251 2622.8,249.5" fill="none" stroke="#8c857e" stroke-width="3.7" stroke-linecap="round" stroke-linejoin="round"/><path d="M2631.9,302.7 L2650.1,312.8 L2631.9,322.9 L2613.7,312.8 Z" fill="none" stroke="#8c857e" stroke-width="3.6" stroke-linecap="round" stroke-linejoin="round"/><path d="M2618.5,317.5 L2613.7,321.9 L2631.9,332 L2650.1,321.9 L2645.3,317.5" fill="none" stroke="#8c857e" stroke-width="3.6" stroke-linecap="round" stroke-linejoin="round"/><path d="M2618.5,326.3 L2613.7,330.7 L2631.9,340.8 L2650.1,330.7 L2645.3,326.3" fill="none" stroke="#8c857e" stroke-width="3.6" stroke-linecap="round" stroke-linejoin="round"/><path d="M2635.9,410.3 V405.5 Q2635.9,402 2632.4,402 H2617.5 Q2614,402 2614,405.5 V423.5 L2622.3,420" fill="none" stroke="#e8e4df" stroke-width="3.8" stroke-linecap="round" stroke-linejoin="round"/><path d="M2631.5,416 H2646.4 Q2649.9,416 2649.9,419.5 V438.8 L2643,434 H2631.5 Q2628,434 2628,430.5 V419.5 Q2628,416 2631.5,416 Z" fill="none" stroke="#e8e4df" stroke-width="3.8" stroke-linecap="round" stroke-linejoin="round"/><path d="M2618.1,490.9 a7.9,7.9 0 1,0 15.8,0 a7.9,7.9 0 1,0 -15.8,0" fill="none" stroke="#e8e4df" stroke-width="4.1" stroke-linecap="round" stroke-linejoin="round"/><path d="M2633.95,484.06 A7.9,7.9 0 1 1 2633.95,497.74" fill="none" stroke="#e8e4df" stroke-width="4.1" stroke-linecap="round" stroke-linejoin="round"/><path d="M2612,511.1 A14.1,10.9 0 0 1 2640.2,511.1 M2637.3,501.1 Q2651,501.5 2652.2,511.1" fill="none" stroke="#e8e4df" stroke-width="4.1" stroke-linecap="round" stroke-linejoin="round"/><path d="M2619,1271.5 Q2613.5,1271 2613.5,1266 Q2614,1259.5 2621,1259.5 Q2628.5,1260 2628.5,1268 Q2628,1278 2620,1284 L2613,1283.5 Q2619,1278 2619,1271.5 Z" fill="none" stroke="#8c857e" stroke-width="3.7" stroke-linecap="round" stroke-linejoin="round"/><path d="M2640.7,1271.5 Q2635.2,1271 2635.2,1266 Q2635.7,1259.5 2642.7,1259.5 Q2650.2,1260 2650.2,1268 Q2649.7,1278 2641.7,1284 L2634.7,1283.5 Q2640.7,1278 2640.7,1271.5 Z" fill="none" stroke="#8c857e" stroke-width="3.7" stroke-linecap="round" stroke-linejoin="round"/><path d="M2616,1349.9 a13.9,13.9 0 1,0 27.8,0 a13.9,13.9 0 1,0 -27.8,0 M2640.3,1360.3 L2648.2,1368.2" fill="none" stroke="#8c857e" stroke-width="3.9" stroke-linecap="round" stroke-linejoin="round"/><path d="M2615.8,1415.9 H2648.2 M2615.8,1423.8 H2648.2 M2615.8,1431.8 H2638.1 M2615.8,1440 H2644.2 M2615.8,1447.8 H2632.4" fill="none" stroke="#8c857e" stroke-width="3.9" stroke-linecap="round" stroke-linejoin="round"/><path d="M2010.5,1448 L2010.5,1464 L2002,1456 Z M2572,1448 L2572,1464 L2580.5,1456 Z" fill="#bcbcbc" stroke="none"/><path d="M251.5,1486.5 V1503.8 M244.2,1494.1 L251.5,1486.5 L258.7,1494.1 M287.9,1486 V1503.3 M280.9,1495.7 L287.9,1503.3 L295,1495.7" fill="none" stroke="#e8e4df" stroke-width="2.9" stroke-linecap="butt" stroke-linejoin="round"/><path d="M2601,1492.3 H2615 Q2617.9,1492.3 2617.9,1495.3 V1504 Q2617.9,1507 2615,1507 H2601 Q2598,1507 2598,1504 V1495.3 Q2598,1492.3 2601,1492.3 Z M2602,1492 V1487 A5.95,5.95 0 0 1 2613.9,1487 V1492" fill="none" stroke="#e8e4df" stroke-width="2.5" stroke-linecap="round" stroke-linejoin="round"/><path d="M2666,1492 h4 v4 h-4 Z M2660,1498 h4 v4 h-4 Z M2666,1498 h4 v4 h-4 Z M2654,1504 h4 v4 h-4 Z M2660,1504 h4 v4 h-4 Z M2648,1510 h4 v4 h-4 Z M2654,1510 h4 v4 h-4 Z" fill="#8d8f8f" stroke="none"/></svg>
<!--/SVG-->

</div></div>
<!-- window border overlay -->
<div class="a" style="left:112px;top:76px;width:2560px;height:1440px;border-radius:20px;border:1px solid #6a6a6a;pointer-events:none"></div>
</body></html>
